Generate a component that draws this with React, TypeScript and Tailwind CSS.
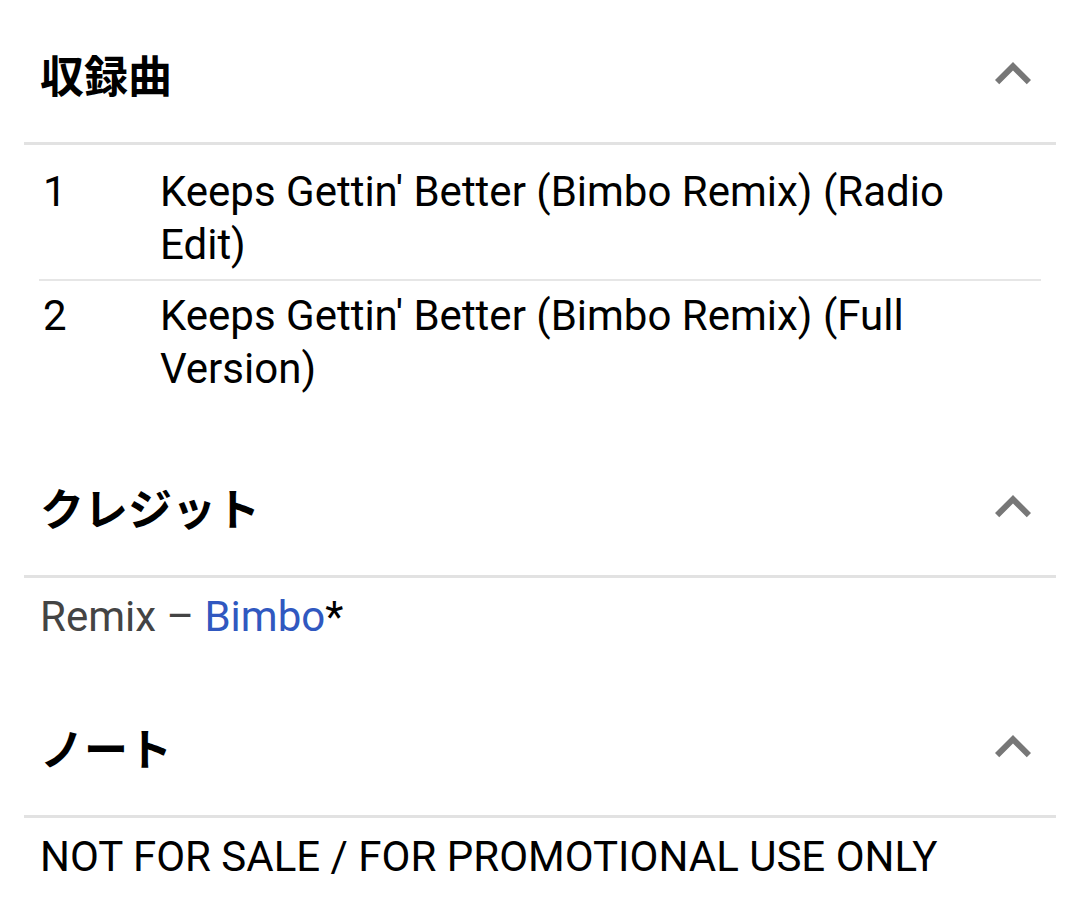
import React from 'react';

const tracks = [
  { no: '1', title: "Keeps Gettin' Better (Bimbo Remix) (Radio Edit)" },
  { no: '2', title: "Keeps Gettin' Better (Bimbo Remix) (Full Version)" },
];

const Chevron: React.FC = () => (
  <svg viewBox="0 0 24 24" className="w-[72px] h-[72px] shrink-0 fill-[#777777]">
    <path d="M12 8l-6 6 1.41 1.41L12 10.83l4.59 4.58L18 14z" />
  </svg>
);

const Section: React.FC<{ title: string; children: React.ReactNode }> = ({ title, children }) => (
  <section>
    <div className="flex items-center justify-between pl-4 pr-[7px] pt-[48px] pb-[42px] h-[142px]">
      <h2 className="text-[44px] leading-[52px] font-bold text-black [font-family:'Noto_Sans_CJK_JP',sans-serif]">
        {title}
      </h2>
      <Chevron />
    </div>
    <div className="h-[3px] bg-[#e2e2e2]" />
    <div className="pt-[12px] pb-[30px]">{children}</div>
  </section>
);

const App: React.FC = () => {
  return (
    <div className="min-h-screen bg-white px-6 text-[42px] leading-[53px] [font-family:Roboto,'Noto_Sans_CJK_JP',sans-serif]">
      <Section title="収録曲">
        <div className="px-[15px]">
          {tracks.map((t, i) => (
            <div
              key={t.no}
              className={`flex py-2 ${i < tracks.length - 1 ? 'border-b-2 border-[#e6e6e6]' : ''}`}
            >
              <div className="w-[121px] shrink-0 pl-[4px] text-black">{t.no}</div>
              <div className="flex-1 pr-[40px] text-black">{t.title}</div>
            </div>
          ))}
        </div>
      </Section>

      <Section title="クレジット">
        <p className="px-4 text-[#444444]">
          Remix – <span className="text-[#3058c0]">Bimbo</span>
          <span className="text-black">*</span>
        </p>
      </Section>

      <Section title="ノート">
        <p className="px-4 text-black">NOT FOR SALE / FOR PROMOTIONAL USE ONLY</p>
      </Section>
    </div>
  );
};

export default App;
